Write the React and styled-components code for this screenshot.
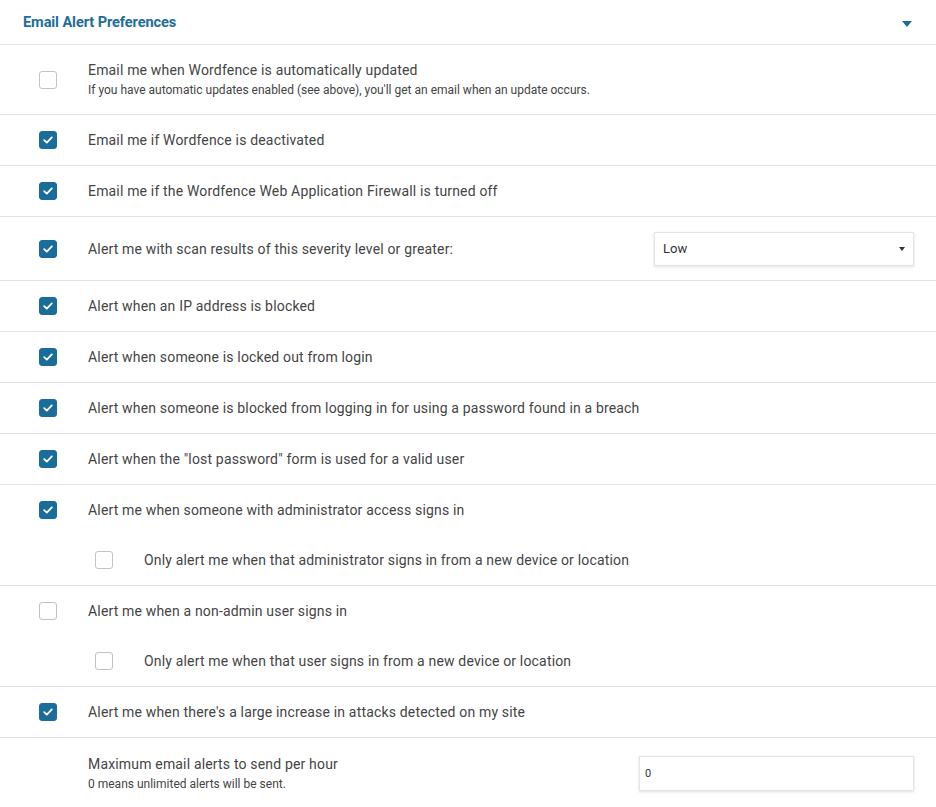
import React from "react";
import styled, { createGlobalStyle } from "styled-components";

const Global = createGlobalStyle`
  html, body { margin: 0; padding: 0; background: #fff; }
  body { font-family: Roboto, "Noto Sans", Arial, sans-serif; color: #2d2d2d; }
  * { box-sizing: border-box; }
`;

const Panel = styled.div`
  width: 936px;
  background: #fff;
`;

const Header = styled.div`
  height: 45px;
  display: flex;
  align-items: center;
  justify-content: space-between;
  padding: 0 24px 0 23px;
  border-bottom: 1px solid #e2e2e2;
`;

const Title = styled.h3`
  margin: 0;
  font-size: 14.6px;
  line-height: 18px;
  font-weight: 700;
  color: #1e6d99;
  letter-spacing: -0.1px;
`;

const Caret = styled.span`
  width: 0;
  height: 0;
  border-left: 5px solid transparent;
  border-right: 5px solid transparent;
  border-top: 6px solid #1e6d99;
  margin-top: 4px;
`;

const Row = styled.div`
  min-height: ${(p) => p.$h || 51}px;
  display: flex;
  align-items: center;
  border-bottom: ${(p) => (p.$last ? "none" : "1px solid #e2e2e2")};
  padding: 0 22px 0 39px;
`;

const Group = styled.div`
  border-bottom: 1px solid #e2e2e2;
`;

const Line = styled.div`
  height: 50px;
  display: flex;
  align-items: center;
  padding: 0 22px 0 ${(p) => (p.$sub ? 95 : 39)}px;
`;

const Box = styled.span`
  flex: none;
  width: 18px;
  height: 18px;
  border-radius: 3px;
  display: flex;
  align-items: center;
  justify-content: center;
  background: ${(p) => (p.$on ? "#1a6d9b" : "#fff")};
  border: 1px solid ${(p) => (p.$on ? "#1a6d9b" : "#c2c2c2")};
`;

const Spacer = styled.span`
  flex: none;
  width: 18px;
`;

const Label = styled.div`
  margin-left: 31px;
  flex: 1;
  display: flex;
  flex-direction: column;
  gap: 4px;
`;

const Main = styled.span`
  font-size: 14px;
  line-height: 18px;
  letter-spacing: 0.17px;
  color: #444;
`;

const Help = styled.span`
  font-size: 12px;
  line-height: 15px;
  color: #444;
`;

const Select = styled.div`
  width: 260px;
  height: 34px;
  display: flex;
  align-items: center;
  justify-content: space-between;
  padding: 0 8px 0 8px;
  border: 1px solid #e4e4e4;
  box-shadow: 0 1px 3px rgba(0, 0, 0, 0.12);
  font-size: 13px;
  color: #333;
`;

const SmallCaret = styled.span`
  width: 0;
  height: 0;
  border-left: 3px solid transparent;
  border-right: 3px solid transparent;
  border-top: 4px solid #333;
`;

const Input = styled.div`
  width: 275px;
  height: 35px;
  display: flex;
  align-items: center;
  padding: 0 5px;
  border: 1px solid #e4e4e4;
  box-shadow: 0 1px 3px rgba(0, 0, 0, 0.12);
  font-size: 11px;
  color: #333;
`;

const Check = () => (
  <svg width="10" height="8" viewBox="0 0 10 8">
    <path d="M1.2 4.2 L3.8 6.6 L8.8 1.4" fill="none" stroke="#fff" strokeWidth="1.8" strokeLinecap="round" strokeLinejoin="round" />
  </svg>
);

const CB = ({ on }) => <Box $on={on}>{on && <Check />}</Box>;

export default function App() {
  return (
    <>
      <Global />
      <Panel>
        <Header>
          <Title>Email Alert Preferences</Title>
          <Caret />
        </Header>
        <Row $h={70}>
          <CB on={false} />
          <Label>
            <Main>Email me when Wordfence is automatically updated</Main>
            <Help>If you have automatic updates enabled (see above), you'll get an email when an update occurs.</Help>
          </Label>
        </Row>
        <Row>
          <CB on />
          <Label><Main>Email me if Wordfence is deactivated</Main></Label>
        </Row>
        <Row>
          <CB on />
          <Label><Main>Email me if the Wordfence Web Application Firewall is turned off</Main></Label>
        </Row>
        <Row $h={64}>
          <CB on />
          <Label><Main>Alert me with scan results of this severity level or greater:</Main></Label>
          <Select>
            <span>Low</span>
            <SmallCaret />
          </Select>
        </Row>
        <Row>
          <CB on />
          <Label><Main>Alert when an IP address is blocked</Main></Label>
        </Row>
        <Row>
          <CB on />
          <Label><Main>Alert when someone is locked out from login</Main></Label>
        </Row>
        <Row>
          <CB on />
          <Label><Main>Alert when someone is blocked from logging in for using a password found in a breach</Main></Label>
        </Row>
        <Row>
          <CB on />
          <Label><Main>Alert when the "lost password" form is used for a valid user</Main></Label>
        </Row>
        <Group>
          <Line>
            <CB on />
            <Label><Main>Alert me when someone with administrator access signs in</Main></Label>
          </Line>
          <Line $sub>
            <CB on={false} />
            <Label><Main>Only alert me when that administrator signs in from a new device or location</Main></Label>
          </Line>
        </Group>
        <Group>
          <Line>
            <CB on={false} />
            <Label><Main>Alert me when a non-admin user signs in</Main></Label>
          </Line>
          <Line $sub>
            <CB on={false} />
            <Label><Main>Only alert me when that user signs in from a new device or location</Main></Label>
          </Line>
        </Group>
        <Row>
          <CB on />
          <Label><Main>Alert me when there's a large increase in attacks detected on my site</Main></Label>
        </Row>
        <Row $h={70} $last>
          <Spacer />
          <Label>
            <Main>Maximum email alerts to send per hour</Main>
            <Help>0 means unlimited alerts will be sent.</Help>
          </Label>
          <Input>0</Input>
        </Row>
      </Panel>
    </>
  );
}
